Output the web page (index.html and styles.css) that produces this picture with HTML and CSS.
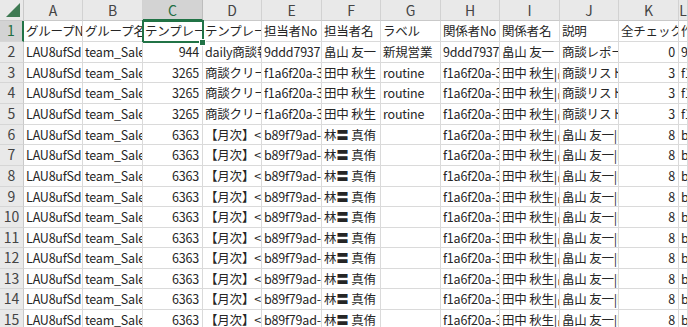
FILE: index.html
```html
<!DOCTYPE html>
<html lang="ja">
<head>
<meta charset="utf-8">
<title>Sheet</title>
<link rel="stylesheet" href="styles.css">
</head>
<body>
<div class="sheet">
  <div class="corner"><span class="tri"></span></div>
  <div class="ch">A</div><div class="ch">B</div><div class="ch sel">C</div><div class="ch">D</div><div class="ch">E</div><div class="ch">F</div><div class="ch">G</div><div class="ch">H</div><div class="ch">I</div><div class="ch">J</div><div class="ch">K</div><div class="ch">L</div>

  <div class="rh rsel">1</div>
  <div class="c">グループNo</div><div class="c">グループ名</div><div class="c active">テンプレートNo</div><div class="c">テンプレート名</div><div class="c">担当者No</div><div class="c">担当者名</div><div class="c">ラベル</div><div class="c">関係者No</div><div class="c">関係者名</div><div class="c">説明</div><div class="c">全チェック数</div><div class="c">作成日</div>

  <div class="rh">2</div>
  <div class="c">LAU8ufSdkQ</div><div class="c">team_Sales</div><div class="c n">944</div><div class="c">daily商談報告</div><div class="c">9ddd7937</div><div class="c">畠山 友一</div><div class="c">新規営業</div><div class="c">9ddd7937</div><div class="c">畠山 友一</div><div class="c">商談レポート</div><div class="c n">0</div><div class="c">9ddd7937</div>

  <div class="rh">3</div>
  <div class="c">LAU8ufSdkQ</div><div class="c">team_Sales</div><div class="c n">3265</div><div class="c">商談クリーニング</div><div class="c">f1a6f20a-3c</div><div class="c">田中 秋生</div><div class="c">routine</div><div class="c">f1a6f20a-3c</div><div class="c">田中 秋生|畠山 友一</div><div class="c">商談リストの確認</div><div class="c n">3</div><div class="c">f1a6f20a</div>

  <div class="rh">4</div>
  <div class="c">LAU8ufSdkQ</div><div class="c">team_Sales</div><div class="c n">3265</div><div class="c">商談クリーニング</div><div class="c">f1a6f20a-3c</div><div class="c">田中 秋生</div><div class="c">routine</div><div class="c">f1a6f20a-3c</div><div class="c">田中 秋生|畠山 友一</div><div class="c">商談リストの確認</div><div class="c n">3</div><div class="c">f1a6f20a</div>

  <div class="rh">5</div>
  <div class="c">LAU8ufSdkQ</div><div class="c">team_Sales</div><div class="c n">3265</div><div class="c">商談クリーニング</div><div class="c">f1a6f20a-3c</div><div class="c">田中 秋生</div><div class="c">routine</div><div class="c">f1a6f20a-3c</div><div class="c">田中 秋生|畠山 友一</div><div class="c">商談リストの確認</div><div class="c n">3</div><div class="c">f1a6f20a</div>

  <div class="rh">6</div>
  <div class="c">LAU8ufSdkQ</div><div class="c">team_Sales</div><div class="c n">6363</div><div class="c">【月次】&lt;報告&gt;</div><div class="c">b89f79ad-5e</div><div class="c">林〓 真侑</div><div class="c"></div><div class="c">f1a6f20a-3c</div><div class="c">田中 秋生|畠山 友一</div><div class="c">畠山 友一|田中 秋生</div><div class="c n">8</div><div class="c">b89f79ad</div>

  <div class="rh">7</div>
  <div class="c">LAU8ufSdkQ</div><div class="c">team_Sales</div><div class="c n">6363</div><div class="c">【月次】&lt;報告&gt;</div><div class="c">b89f79ad-5e</div><div class="c">林〓 真侑</div><div class="c"></div><div class="c">f1a6f20a-3c</div><div class="c">田中 秋生|畠山 友一</div><div class="c">畠山 友一|田中 秋生</div><div class="c n">8</div><div class="c">b89f79ad</div>

  <div class="rh">8</div>
  <div class="c">LAU8ufSdkQ</div><div class="c">team_Sales</div><div class="c n">6363</div><div class="c">【月次】&lt;報告&gt;</div><div class="c">b89f79ad-5e</div><div class="c">林〓 真侑</div><div class="c"></div><div class="c">f1a6f20a-3c</div><div class="c">田中 秋生|畠山 友一</div><div class="c">畠山 友一|田中 秋生</div><div class="c n">8</div><div class="c">b89f79ad</div>

  <div class="rh">9</div>
  <div class="c">LAU8ufSdkQ</div><div class="c">team_Sales</div><div class="c n">6363</div><div class="c">【月次】&lt;報告&gt;</div><div class="c">b89f79ad-5e</div><div class="c">林〓 真侑</div><div class="c"></div><div class="c">f1a6f20a-3c</div><div class="c">田中 秋生|畠山 友一</div><div class="c">畠山 友一|田中 秋生</div><div class="c n">8</div><div class="c">b89f79ad</div>

  <div class="rh">10</div>
  <div class="c">LAU8ufSdkQ</div><div class="c">team_Sales</div><div class="c n">6363</div><div class="c">【月次】&lt;報告&gt;</div><div class="c">b89f79ad-5e</div><div class="c">林〓 真侑</div><div class="c"></div><div class="c">f1a6f20a-3c</div><div class="c">田中 秋生|畠山 友一</div><div class="c">畠山 友一|田中 秋生</div><div class="c n">8</div><div class="c">b89f79ad</div>

  <div class="rh">11</div>
  <div class="c">LAU8ufSdkQ</div><div class="c">team_Sales</div><div class="c n">6363</div><div class="c">【月次】&lt;報告&gt;</div><div class="c">b89f79ad-5e</div><div class="c">林〓 真侑</div><div class="c"></div><div class="c">f1a6f20a-3c</div><div class="c">田中 秋生|畠山 友一</div><div class="c">畠山 友一|田中 秋生</div><div class="c n">8</div><div class="c">b89f79ad</div>

  <div class="rh">12</div>
  <div class="c">LAU8ufSdkQ</div><div class="c">team_Sales</div><div class="c n">6363</div><div class="c">【月次】&lt;報告&gt;</div><div class="c">b89f79ad-5e</div><div class="c">林〓 真侑</div><div class="c"></div><div class="c">f1a6f20a-3c</div><div class="c">田中 秋生|畠山 友一</div><div class="c">畠山 友一|田中 秋生</div><div class="c n">8</div><div class="c">b89f79ad</div>

  <div class="rh">13</div>
  <div class="c">LAU8ufSdkQ</div><div class="c">team_Sales</div><div class="c n">6363</div><div class="c">【月次】&lt;報告&gt;</div><div class="c">b89f79ad-5e</div><div class="c">林〓 真侑</div><div class="c"></div><div class="c">f1a6f20a-3c</div><div class="c">田中 秋生|畠山 友一</div><div class="c">畠山 友一|田中 秋生</div><div class="c n">8</div><div class="c">b89f79ad</div>

  <div class="rh">14</div>
  <div class="c">LAU8ufSdkQ</div><div class="c">team_Sales</div><div class="c n">6363</div><div class="c">【月次】&lt;報告&gt;</div><div class="c">b89f79ad-5e</div><div class="c">林〓 真侑</div><div class="c"></div><div class="c">f1a6f20a-3c</div><div class="c">田中 秋生|畠山 友一</div><div class="c">畠山 友一|田中 秋生</div><div class="c n">8</div><div class="c">b89f79ad</div>

  <div class="rh">15</div>
  <div class="c">LAU8ufSdkQ</div><div class="c">team_Sales</div><div class="c n">6363</div><div class="c">【月次】&lt;報告&gt;</div><div class="c">b89f79ad-5e</div><div class="c">林〓 真侑</div><div class="c"></div><div class="c">f1a6f20a-3c</div><div class="c">田中 秋生|畠山 友一</div><div class="c">畠山 友一|田中 秋生</div><div class="c n">8</div><div class="c">b89f79ad</div>

  <span class="handle"></span>
</div>
</body>
</html>
```

FILE: styles.css
```css
html, body {
  margin: 0;
  padding: 0;
  background: #ffffff;
  overflow: hidden;
}

.sheet {
  position: relative;
  display: grid;
  grid-template-columns: 24px 59px 60px 60px 59px 60px 59px 60px 59px 60px 59px 60px 9px;
  grid-template-rows: 21px 21px 21px 20px 21px 21px 20px 21px 21px 20px 21px 20px 21px 20px 21px 20px;
  width: 688px;
  font-family: "Noto Sans CJK JP", sans-serif;
  font-size: 12.5px;
  color: #262626;
}

.corner {
  position: relative;
  background: #e9e9e9;
  border-right: 1px solid #c9c9c9;
  border-bottom: 1px solid #c9c9c9;
  box-sizing: border-box;
}

.tri {
  position: absolute;
  right: 3px;
  bottom: 3px;
  width: 0;
  height: 0;
  border-left: 14px solid transparent;
  border-bottom: 14px solid #3f7a53;
}

.ch {
  background: #e9e9e9;
  border-right: 1px solid #d2d2d2;
  border-bottom: 1px solid #c9c9c9;
  box-sizing: border-box;
  text-align: center;
  line-height: 20px;
  font-size: 14px;
  color: #444444;
}

.ch.sel {
  background: #d3d3d3;
  color: #1f6e43;
  border-bottom: 2px solid #217346;
  border-right-color: #bdbdbd;
}

.rh {
  background: #e9e9e9;
  border-right: 1px solid #c9c9c9;
  border-bottom: 1px solid #d6d6d6;
  box-sizing: border-box;
  text-align: center;
  font-size: 14px;
  line-height: 19px;
  color: #444444;
}

.rh.rsel {
  background: #d3d3d3;
  color: #1f6e43;
  border-right: 2px solid #217346;
}

.c {
  border-right: 1px solid #dadada;
  border-bottom: 1px solid #dadada;
  box-sizing: border-box;
  white-space: nowrap;
  overflow: hidden;
  padding: 0 1px 0 2px;
  line-height: 20px;
  letter-spacing: -0.2px;
}

.c.n {
  text-align: right;
  padding: 0 3px 0 1px;
}

.c.active {
  outline: 2px solid #217346;
  outline-offset: -1px;
}

.handle {
  position: absolute;
  left: 199px;
  top: 39px;
  width: 5px;
  height: 5px;
  background: #217346;
  border: 1px solid #ffffff;
}
```
